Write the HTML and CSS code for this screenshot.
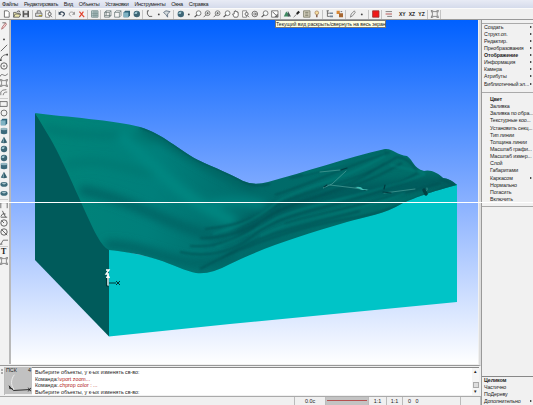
FILE: index.html
```html
<!DOCTYPE html>
<html lang="ru">
<head>
    <meta charset="UTF-8">
    <title>3D</title>
    <link rel="stylesheet" href="styles.css">
</head>
<body>
    <!-- Icon set -->
    <svg class="defs" width="0" height="0">
        <symbol id="new" viewBox="0 0 10 10"><path d="M2 1h4l2 2v6H2z" fill="#fff" stroke="#555"/></symbol>
        <symbol id="open" viewBox="0 0 10 10"><path d="M1 9V3h3l1 1h3v2M1 9l2-4h7L8 9z" fill="#eee9b0" stroke="#555"/><path d="M5 2l3-1 1 2" fill="none" stroke="#444"/></symbol>
        <symbol id="save" viewBox="0 0 10 10"><path d="M1 1h8v8H1z" fill="#555"/><path d="M3 1h4v3H3zM3 6h4v3H3z" fill="#ddd"/></symbol>
        <symbol id="print" viewBox="0 0 10 10"><path d="M3 4V1h4l1 3M1 4h8v4H1z" fill="#ddd" stroke="#666"/><path d="M5 7h4" stroke="#a90"/></symbol>
        <symbol id="preview" viewBox="0 0 10 10"><path d="M1 1h5v8H1z" fill="#fff" stroke="#777"/><circle cx="6" cy="5" r="2" fill="#eee" stroke="#555"/><path d="M7 7l2 2" stroke="#555"/></symbol>
        <symbol id="undo" viewBox="0 0 10 10"><path d="M2 4c3-3 7-1 6 2L6 8" fill="none" stroke="#345" stroke-width="1.5"/><path d="M1 2v4h4z" fill="#345"/></symbol>
        <symbol id="redo" viewBox="0 0 10 10"><path d="M8 4C5 1 1 3 2 6l2 2" fill="none" stroke="#999" stroke-width="1.2"/><path d="M9 2v4H5z" fill="#999"/></symbol>
        <symbol id="cut" viewBox="0 0 10 10"><path d="M2 2l6 7M7 2L2 9" stroke="#e0402c" stroke-width="1.4"/></symbol>
        <symbol id="grid" viewBox="0 0 10 10"><path d="M1 1h8v8H1z" fill="#cfdede" stroke="#6b8585"/><path d="M4 1v8M6.500 1v8M1 4h8M1 6.500h8" stroke="#6b8585"/></symbol>
        <symbol id="wire" viewBox="0 0 10 10"><path d="M1 3h6v6H1zM1 3l2-2h6v6L7 9M7 3l2-2M3 1v6H1M3 7h6" fill="none" stroke="#566" stroke-width=".8"/></symbol>
        <symbol id="cube" viewBox="0 0 10 10"><path d="M1 3h6v6H1zM1 3l2-2h6v6L7 9M7 3l2-2" fill="#f6f6f6" stroke="#566" stroke-width=".8"/></symbol>
        <symbol id="solid" viewBox="0 0 10 10"><path d="M1 3l2-2h6v6L7 9H1z" fill="#2e6379"/><path d="M1 3h6v6H1z" fill="#7fb3c4"/></symbol>
        <symbol id="ball" viewBox="0 0 10 10"><circle cx="5" cy="5" r="4" fill="#3e6676"/><path d="M2 5c0-2 2-3 4-3L5 5z" fill="#9dc3ce"/></symbol>
        <symbol id="cylinder" viewBox="0 0 10 10"><path d="M1 2h8v6q-4 2-8 0z" fill="#3c6a7c"/><ellipse cx="5" cy="2.500" rx="4" ry="1.500" fill="#92b5c1"/></symbol>
        <symbol id="cone" viewBox="0 0 10 10"><path d="M5 1l4 7q-4 2-8 0z" fill="#36606f"/><path d="M5 1v7H3z" fill="#7ba1ae"/></symbol>
        <symbol id="torus" viewBox="0 0 10 10"><ellipse cx="5" cy="5.500" rx="4.500" ry="3" fill="#3e6b7b"/><ellipse cx="5" cy="4.500" rx="2.500" ry="1" fill="#a9c5cd"/></symbol>
        <symbol id="axes" viewBox="0 0 10 10"><path d="M2 1v4l2 3h4M2 1h2" fill="none" stroke="#444"/></symbol>
        <symbol id="dot" viewBox="0 0 10 10"><circle cx="5" cy="5.500" r="1.200" fill="#444"/></symbol>
        <symbol id="filter" viewBox="0 0 10 10"><path d="M1 3l3-2 5 1-3 3v4L4 6z" fill="#d5dbdd" stroke="#567"/></symbol>
        <symbol id="zoom" viewBox="0 0 10 10"><circle cx="6" cy="4" r="3" fill="#f6fafa" stroke="#666"/><path d="M4 6L1 9" stroke="#555" stroke-width="1.5"/></symbol>
        <symbol id="zoomin" viewBox="0 0 10 10"><circle cx="6" cy="4" r="3" fill="#f6fafa" stroke="#666"/><path d="M4 6L1 9M4.500 4h3M6 2.500v3" stroke="#555"/></symbol>
        <symbol id="hand" viewBox="0 0 10 10"><path d="M3 9L1 5h2V2h1V1h1v1h2v1h1v4L7 9z" fill="#fff" stroke="#444" stroke-width=".9"/></symbol>
        <symbol id="rotate" viewBox="0 0 10 10"><circle cx="5" cy="5" r="3.500" fill="none" stroke="#555"/><path d="M3 5h4M5 3l2 2-2 2" fill="none" stroke="#555"/></symbol>
        <symbol id="fit" viewBox="0 0 10 10"><path d="M1 1h8v8H1z" fill="#fff" stroke="#666"/><path d="M2 2l6 6M5 8h3V5" fill="none" stroke="#444"/></symbol>
        <symbol id="brush" viewBox="0 0 10 10"><path d="M0 8l3-6 3 3v3z" fill="#3f8a62"/><path d="M5 1l4 7H5z" fill="#455"/></symbol>
        <symbol id="pencil" viewBox="0 0 10 10"><path d="M1 9l4-4" stroke="#666"/><path d="M5 5l3-3" stroke="#222" stroke-width="2.600"/></symbol>
        <symbol id="sheet" viewBox="0 0 10 10"><path d="M1 1h8v8H1z" fill="#d3cfbd" stroke="#776"/><path d="M3 3h4M3 5h4M3 7h4" stroke="#776"/></symbol>
        <symbol id="bulb" viewBox="0 0 10 10"><circle cx="5" cy="3.500" r="2.300" fill="#f7dfa0" stroke="#a86"/><path d="M5 6v3" stroke="#865" stroke-width="2"/></symbol>
        <symbol id="tree" viewBox="0 0 10 10"><path d="M2 1v7h3M2 4h3M1 1h3" fill="none" stroke="#555"/><path d="M5 3h4v2H5zM5 7h4v2H5z" fill="#789"/></symbol>
        <symbol id="blocks" viewBox="0 0 10 10"><path d="M1 1h4v4H1z" fill="#d78736"/><path d="M4 4h5v5H4z" fill="#a66733"/><path d="M6 2h2" stroke="#555"/></symbol>
        <symbol id="pen" viewBox="0 0 10 10"><path d="M2 9l1-4 4-4 1 2-3 4z" fill="#eee" stroke="#777"/></symbol>
        <symbol id="pick" viewBox="0 0 10 10"><path d="M2 9l1-3 4-5 1 2-3 4z" fill="#f7d6d6" stroke="#a66"/><path d="M3 1h4" stroke="#555"/></symbol>
        <symbol id="red" viewBox="0 0 10 10"><path d="M1 1h8v8H1z" fill="#f01818" stroke="#933"/></symbol>
        <symbol id="lines" viewBox="0 0 10 10"><path d="M1 2h8M3 8h6" stroke="#666"/><path d="M1 5h8" stroke="#a33"/></symbol>
        <symbol id="frame" viewBox="0 0 10 10"><path d="M2 2h6v6H2zM0 1h3M7 1h3M0 9h3M7 9h3M1 0v3M9 0v3M1 7v3M9 7v3" fill="none" stroke="#777"/></symbol>
        <symbol id="line" viewBox="0 0 10 10"><path d="M1 9l8-8" stroke="#444"/></symbol>
        <symbol id="arc" viewBox="0 0 10 10"><path d="M1 9c0-4 3-7 8-7" fill="none" stroke="#444"/><path d="M0 8h2v2H0zM8 1h2v2H8z" fill="#444"/></symbol>
        <symbol id="circle" viewBox="0 0 10 10"><circle cx="5" cy="5" r="4" fill="none" stroke="#444"/><circle cx="5" cy="5" r="1" fill="#444"/></symbol>
        <symbol id="spline" viewBox="0 0 10 10"><path d="M0 7c3-7 5 3 10-4" fill="none" stroke="#555"/></symbol>
        <symbol id="offset" viewBox="0 0 10 10"><path d="M1 9V5q1-3 7-3M4 9q0-4 5-4" fill="none" stroke="#666"/></symbol>
        <symbol id="rect" viewBox="0 0 10 10"><path d="M0 2h9v6H0z" fill="none" stroke="#555"/></symbol>
        <symbol id="ring" viewBox="0 0 10 10"><circle cx="5" cy="5" r="3.700" fill="none" stroke="#555"/></symbol>
        <symbol id="dim" viewBox="0 0 10 10"><path d="M1 9V2h8v7M0 2h3M7 2h3" fill="none" stroke="#555"/></symbol>
        <symbol id="angle" viewBox="0 0 10 10"><path d="M3 1l4 8M1 8q2-5 6-3M1 9h8" fill="none" stroke="#444"/></symbol>
        <symbol id="radius" viewBox="0 0 10 10"><circle cx="5" cy="5" r="4" fill="none" stroke="#444"/><path d="M5 5L2 2" stroke="#444"/></symbol>
        <symbol id="diam" viewBox="0 0 10 10"><circle cx="5" cy="5" r="4" fill="none" stroke="#444"/><path d="M2 2l7 7" stroke="#444"/></symbol>
        <symbol id="leader" viewBox="0 0 10 10"><path d="M1 9l3-5h6M0 9h3" fill="none" stroke="#555"/></symbol>
    </svg>

    <div class="app">
        <nav class="menu">
            <span>Файлы</span><span>Редактировать</span><span>Вид</span><span>Объекты</span><span>Установки</span><span>Инструменты</span><span>Окна</span><span>Справка</span>
        </nav>

        <div class="toolbar">
            <div class="group"><svg><use href="#new"/></svg><svg><use href="#open"/></svg><svg><use href="#save"/></svg></div>
            <div class="group"><svg><use href="#print"/></svg><svg><use href="#preview"/></svg></div>
            <div class="group"><svg><use href="#undo"/></svg><svg><use href="#redo"/></svg><svg><use href="#cut"/></svg></div>
            <div class="group"><svg><use href="#grid"/></svg></div>
            <div class="group"><svg><use href="#wire"/></svg><svg><use href="#cube"/></svg><svg><use href="#solid"/></svg><svg><use href="#ball"/></svg></div>
            <div class="group"><svg><use href="#axes"/></svg><svg class="narrow"><use href="#dot"/></svg><svg><use href="#filter"/></svg></div>
            <div class="group"><svg><use href="#ball"/></svg><svg class="narrow"><use href="#dot"/></svg><svg><use href="#zoom"/></svg><svg><use href="#zoomin"/></svg><svg><use href="#zoomin"/></svg><svg><use href="#zoom"/></svg><svg><use href="#hand"/></svg><svg><use href="#preview"/></svg><svg><use href="#rotate"/></svg><svg><use href="#zoom"/></svg><svg><use href="#fit"/></svg></div>
            <div class="group"><svg><use href="#brush"/></svg><svg><use href="#pencil"/></svg><svg><use href="#sheet"/></svg><svg><use href="#bulb"/></svg></div>
            <div class="group"><svg><use href="#tree"/></svg><svg><use href="#blocks"/></svg></div>
            <div class="group"><svg><use href="#pen"/></svg><svg><use href="#dot"/></svg></div>
            <div class="group"><svg><use href="#red"/></svg></div>
            <div class="group planes"><svg><use href="#lines"/></svg><b>XY</b><b>XZ</b><b>YZ</b></div>
            <div class="group"><svg><use href="#frame"/></svg></div>
        </div>

        <div class="middle">
            <div class="work">
                <div class="stage">
                    <div class="tools">
                        <svg class="pick"><use href="#pick"/></svg>
                        <svg><use href="#dot"/></svg><svg><use href="#line"/></svg><svg><use href="#arc"/></svg><svg><use href="#circle"/></svg><svg><use href="#spline"/></svg><svg><use href="#frame"/></svg><svg><use href="#offset"/></svg>
                        <hr>
                        <svg><use href="#rect"/></svg><svg><use href="#ring"/></svg><svg><use href="#solid"/></svg><svg><use href="#cylinder"/></svg><svg><use href="#cone"/></svg><svg><use href="#ball"/></svg><svg><use href="#ball"/></svg><svg><use href="#cylinder"/></svg><svg><use href="#cone"/></svg><svg><use href="#torus"/></svg><svg><use href="#torus"/></svg>
                        <hr>
                        <svg><use href="#dim"/></svg><svg><use href="#angle"/></svg><svg><use href="#radius"/></svg><svg><use href="#diam"/></svg><svg><use href="#leader"/></svg>
                        <hr>
                        <b>T</b><svg><use href="#frame"/></svg>
                    </div>

                    <svg class="view" viewBox="11 20 467 344" preserveAspectRatio="none">
                        <defs>
                            <linearGradient id="sky" x1="0" y1="0" x2="0" y2="1">
                                <stop offset="0" stop-color="#0060ff"/>
                                <stop offset=".5" stop-color="#82acff"/>
                                <stop offset="1" stop-color="#fff"/>
                            </linearGradient>
                            <linearGradient id="ground" gradientUnits="userSpaceOnUse" x1="40" y1="110" x2="457" y2="190">
                                <stop offset="0" stop-color="#008578"/>
                                <stop offset=".3" stop-color="#007f7b"/>
                                <stop offset=".55" stop-color="#006a69"/>
                                <stop offset="1" stop-color="#006f69"/>
                            </linearGradient>
                            <filter id="soft" x="-30%" y="-50%" width="160%" height="200%"><feGaussianBlur stdDeviation="4"/></filter>
                            <filter id="fine" x="-10%" y="-30%" width="120%" height="160%"><feGaussianBlur stdDeviation="1.1"/></filter>
                            <path id="relief" d="M35 113C65 117 114 120 140 127C165 135 177 149 198 160C215 168 231 174 243 181Q254 186 268 182C305 172 346 158 385 149C392 148 397 155 407 156C414 161 413 168 424 171C430 169 438 173 443 178Q451 179 457 185C430 192 417 197 403 203C383 215 367 216 347 222C300 236 270 245 230 264Q210 275 196 273C173 268 161 255 109 250Q103 247 97 236C84 211 68 170 50 138Z"/>
                            <clipPath id="clip"><use href="#relief"/></clipPath>
                        </defs>
                        <path d="M11 20h467v344H11z" fill="url(#sky)"/>
                        <path d="M35 113l17 22L112 248l-3 88.500L35 260z" fill="#005b5b"/>
                        <path d="M109 248L200 268 300 230 457 184v118L230 324 109 336.500z" fill="#00c4c7"/>
                        <use href="#relief" fill="url(#ground)"/>
                        <g clip-path="url(#clip)">
                            <g filter="url(#soft)" fill="none">
                                <path d="M45 128C90 140 115 130 155 142" stroke="#00766f" stroke-width="6"/>
                                <path d="M65 165C110 155 120 172 170 176" stroke="#007771" stroke-width="6"/>
                                <path d="M80 190C140 200 170 230 232 240" stroke="#006464" stroke-width="9"/>
                                <path d="M140 127C185 150 205 170 256 188" stroke="#00605f" stroke-width="7"/>
                                <path d="M120 135C160 170 180 200 235 222" stroke="#008781" stroke-width="11"/>
                                <path d="M105 245C150 242 190 280 235 255" stroke="#006464" stroke-width="9"/>
                                <path d="M235 235C290 190 350 195 455 180" stroke="#005a5b" stroke-width="13"/>
                                <path d="M210 205Q235 198 265 205" stroke="#008480" stroke-width="8"/>
                            </g>
                            <g filter="url(#fine)" fill="none" stroke="#005254" stroke-width="1.500">
                                <path d="M243 181Q255 188 270 184M140 127C165 135 177 149 198 160C215 168 231 174 246 183"/>
                                <path d="M205 229Q250 225 275 206C310 188 355 184 397 157"/>
                                <path d="M180 252Q225 262 260 230C303 205 360 207 418 173"/>
                                <path d="M190 246Q230 249 260 222C295 194 340 200 402 163"/>
                                <path d="M200 238Q236 239 275 213C315 195 350 189 385 163"/>
                                <path d="M275 195C310 184 350 165 390 152M290 178C320 172 350 163 386 151"/>
                                <path d="M200 269C240 247 300 226 347 219S400 202 456 184"/>
                                <path d="M220 259C260 232 320 222 360 211M285 224C320 214 350 209 440 183M397 157Q410 158 417 172M440 179l16 6"/>
                            </g>
                            <g filter="url(#fine)" fill="none" stroke="#08827b" stroke-width="1.200">
                                <path d="M213 234Q255 223 278 201C310 184 340 182 385 156"/>
                                <path d="M216 247Q250 235 277 218C320 200 370 196 425 174"/>
                                <path d="M260 236C300 215 350 215 405 193M303 174Q350 163 385 152M390 165L425 173"/>
                            </g>
                        </g>
                        <g fill="none" stroke-linecap="round">
                            <path d="M320 172l20-2M346 171l-14 13-9 4 5-3M330 185l25 3 12 2M384 193l31-4M425 190q3 2 2-2" stroke="#4fa19b" stroke-width=".7"/>
                            <path d="M341 170l6-2M324 187l3-2M357 187l8 3M384 189l1-4M383 192l8 1" stroke="#013c40" stroke-width="1.200"/>
                            <path d="M424 190l2 4" stroke="#023f42" stroke-width="3.500"/>
                        </g>
                        <path d="M355 187q6-1 8 2l6 1-7 0z" fill="#42c0b7"/>
                        <!-- Axis marker -->
                        <path d="M108 286v-10M106.500 278l1.500-3 1.500 3M106 270h3l-3 4h3" fill="none" stroke="#fff" stroke-width="1.300"/>
                        <path d="M109 283h7M116 281l4 4M120 281l-4 4M106.500 278v8h2" fill="none" stroke="#033" stroke-width="1"/>
                    </svg>
                    <div class="tip">Текущий вид раскрыть/свернуть на весь экран</div>
                </div>

                <div class="console">
                    <div class="grip"><i></i><i></i></div>
                    <div class="thumb">
                        <span>ПСК</span><span>4</span>
                        <svg viewBox="0 0 27 20"><path d="M9 0C5 5 5 12 9 16" fill="none" stroke="#eee"/><path d="M3 12l5 5 18-1M4 12v3h3M24 14l3 4M27 14l-3 4" fill="none" stroke="#222"/></svg>
                    </div>
                    <div class="log">
                        <p>Выберите объекты, у к-ых изменять св-во:</p>
                        <p>Команда:<em>\vport zoom...</em></p>
                        <p>Команда:<em>.chprop color : ...</em></p>
                        <p>Выберите объекты, у к-ых изменять св-во:</p>
                    </div>
                    <div class="scroll"><span>▴</span><i></i><span>▾</span></div>
                </div>

                <div class="status">
                    <span></span><span>0.0с</span><span class="sample"><i></i></span><span>1:1</span><span>1:1</span><span class="pair">0&nbsp;&nbsp;&nbsp;0</span><span></span>
                </div>
            </div>

            <aside class="side">
                <div class="handle"></div>
                <ul class="main">
                    <li class="more">Создать</li>
                    <li class="more">Структ.оп.</li>
                    <li class="more">Редактир.</li>
                    <li class="more">Преобразования</li>
                    <li class="more active">Отображение</li>
                    <li class="more">Информация</li>
                    <li class="more">Камера</li>
                    <li class="more">Атрибуты</li>
                    <li class="more">Библиотечный эл...</li>
                </ul>
                <ul class="sub">
                    <li class="active">Цвет</li>
                    <li>Заливка</li>
                    <li>Заливка по обра...</li>
                    <li>Текстурные коо...</li>
                    <li>Установить секц...</li>
                    <li>Тип линии</li>
                    <li>Толщина линии</li>
                    <li>Масштаб графи...</li>
                    <li>Масштаб измер...</li>
                    <li>Слой</li>
                    <li>Габаритами</li>
                    <li class="more">Каркасом</li>
                    <li>Нормально</li>
                    <li>Погасить</li>
                    <li>Включить</li>
                </ul>
                <ul class="modes">
                    <li class="active">Целиком</li>
                    <li>Частично</li>
                    <li>ПоДереву</li>
                    <li class="more">Дополнительно</li>
                </ul>
            </aside>
        </div>
        <div class="seam"></div>
    </div>
</body>
</html>
```

FILE: styles.css
```css
* {
    box-sizing: border-box;
}

body {
    margin: 0;
    font: 5.4px/7px "Liberation Sans", Arial, sans-serif;
    color: #222;
    background: #f0f0f0;
    overflow: hidden;
}

.defs {
    position: absolute;
}

.app {
    position: relative;
    width: 533px;
    height: 405px;
    display: flex;
    flex-direction: column;
}

/* Menu */
.menu {
    height: 8px;
    padding-left: 2px;
    display: flex;
    gap: 5.9px;
    font-size: 5.5px;
    line-height: 8px;
    letter-spacing: -.3px;
    white-space: nowrap;
    background: linear-gradient(#e8ebf5, #d5dbeb);
}

/* Toolbar */
.toolbar {
    height: 12px;
    padding-left: 2px;
    display: flex;
    gap: 1.8px;
    align-items: center;
    background: #f0f0f0;
    border-top: 1px solid #fafafa;
    border-bottom: 1px solid #999;
}

.group {
    display: flex;
    align-items: center;
    height: 9px;
    padding-right: .9px;
    border-right: 1px solid #c4c4c4;
}

.group svg {
    width: 9.6px;
    height: 8px;
}

.group .narrow {
    width: 7.6px;
}

.planes b {
    width: 9.6px;
    text-align: center;
    font-size: 5px;
}

.planes svg {
    margin-right: 4px;
}

.middle {
    display: flex;
    height: 385px;
}

.work {
    width: 481px;
    display: flex;
    flex-direction: column;
}

.stage {
    position: relative;
    display: flex;
    height: 346px;
    border-right: 2px solid #ddd;
    border-bottom: 1px solid #999;
}

.tools {
    width: 11px;
    height: 344px;
    display: flex;
    flex-direction: column;
    border-right: 2px solid #b9b9b9;
    background: #f2f2f2;
}

.tools svg {
    width: 8px;
    height: 8px;
    margin-bottom: .9px;
    flex-shrink: 0;
}

.tools .pick {
    margin: 2px 0 5px;
}

.tools hr {
    width: 8px;
    margin: 1px 0;
    border: 0;
    border-top: 1px solid #ccc;
}

.tools b {
    padding-left: 1px;
    margin-bottom: 1px;
    font: bold 8px/8px "Liberation Serif", serif;
}

.view {
    width: 467px;
    height: 344px;
    display: block;
}

.tip {
    position: absolute;
    left: 275px;
    top: 0;
    width: 111px;
    height: 8px;
    border: 1px solid #777;
    background: #ffffe1;
    font-size: 5.2px;
    line-height: 6px;
    letter-spacing: -.06px;
    text-align: center;
    white-space: nowrap;
}

/* Command log */
.console {
    display: flex;
    height: 31px;
    padding: 1px 2px 1px 0;
    border-bottom: 1px solid #aaa;
}

.grip {
    width: 5px;
    padding: 2px 1px;
    border-right: 1px solid #bbb;
}

.grip i {
    display: block;
    height: 2px;
    margin-bottom: 1px;
    border: 1px solid #aaa;
}

.thumb {
    width: 27px;
    height: 27px;
    padding: 0 1px;
    display: flex;
    flex-wrap: wrap;
    justify-content: space-between;
    background: #c1c1c1;
}

.thumb svg {
    width: 25px;
    height: 20px;
}

.log {
    flex: 1;
    padding: 1px 0 0 3px;
    border-top: 1px solid #888;
    background: #fff;
    font-size: 5.3px;
}

.log p {
    margin: 0;
    height: 6.7px;
    line-height: 6.7px;
}

.log em {
    font-style: normal;
    color: #b02020;
}

.scroll {
    width: 7px;
    display: flex;
    flex-direction: column;
    align-items: center;
    justify-content: space-between;
    border-top: 1px solid #888;
    background: #f5f5f5;
}

.scroll i {
    width: 6px;
    height: 6px;
    margin-top: 6px;
    border: 1px solid #aaa;
    background: #ddd;
}

/* Right panel */
.side {
    width: 52px;
    display: flex;
    flex-direction: column;
    border-left: 1px solid #999;
    background: #f1f1f1;
    font-size: 5.3px;
    line-height: 7.15px;
    letter-spacing: -.12px;
}

.side ul {
    margin: 0;
    padding: 0 0 0 2px;
    list-style: none;
}

.side li {
    position: relative;
    height: 7.15px;
    white-space: nowrap;
}

.side .active {
    font-weight: bold;
}

.more::after {
    content: "";
    position: absolute;
    right: 1px;
    top: 2px;
    border: 1.5px solid transparent;
    border-left: 2px solid #111;
    border-right: 0;
}

.handle {
    height: 3.5px;
    border-bottom: 1px solid #aaa;
}

.side .main {
    height: 68.5px;
}

.side .sub {
    height: 115px;
    padding: 3px 0 0 8px;
    border-top: 1px solid #aaa;
    border-bottom: 1px solid #aaa;
}

.side .modes {
    margin-top: auto;
    padding-top: 0;
    height: 29.5px;
    border-top: 1px solid #888;
}

/* Status bar */
.status {
    height: 8px;
    display: grid;
    grid-template-columns: 295px 31px 43px 18px 16px 58px 20px;
    line-height: 8px;
    text-align: center;
}

.status span {
    border-right: 1px solid #bbb;
}

.status .sample {
    padding-top: 3px;
    background: #c3c3c3;
}

.sample i {
    display: block;
    height: 1px;
    margin: 0 1px;
    background: #b65050;
}

.status .pair {
    padding-left: 5px;
    text-align: left;
}

.seam {
    position: absolute;
    left: 0;
    top: 202px;
    width: 533px;
    height: 1px;
    background: #fff;
}
```
